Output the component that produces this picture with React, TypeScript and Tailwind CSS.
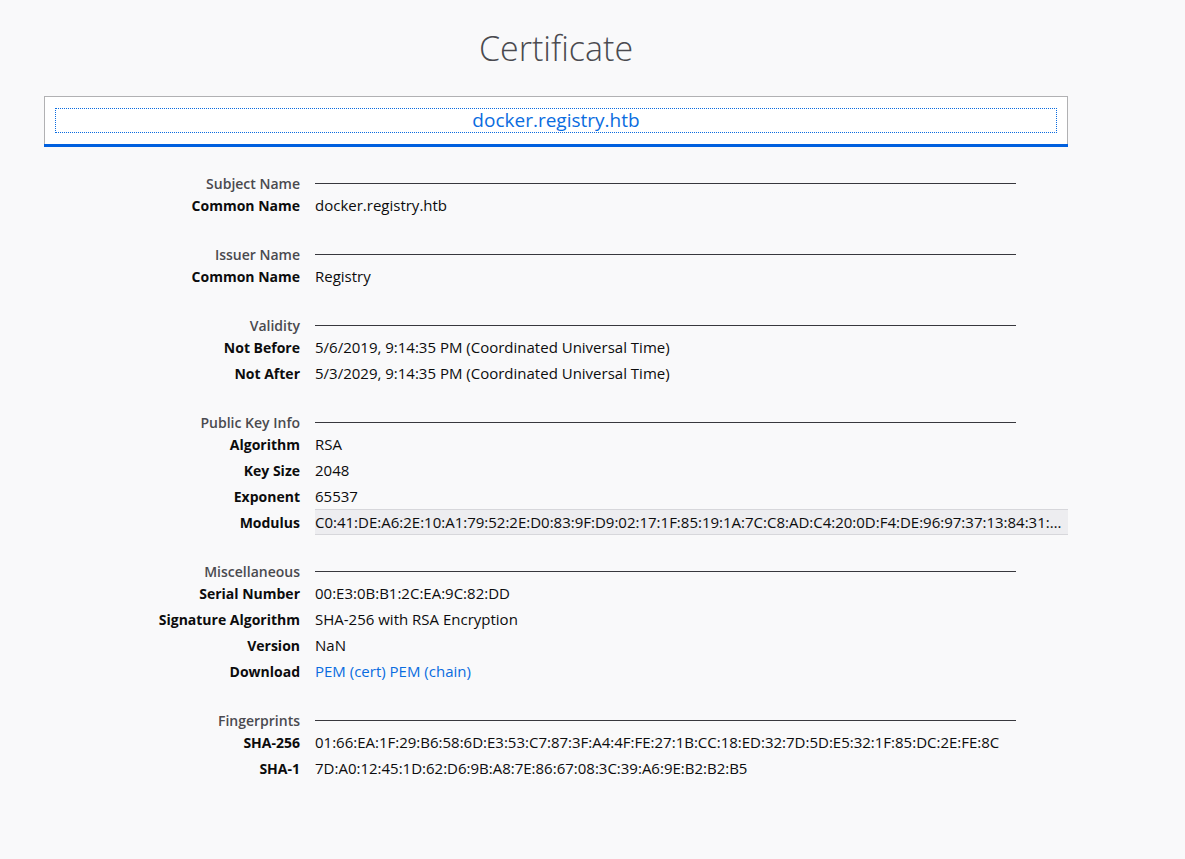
import React from "react";

type Row = { label: string; value: React.ReactNode; box?: boolean };
type Section = { title: string; rows: Row[] };

const sections: Section[] = [
  { title: "Subject Name", rows: [{ label: "Common Name", value: "docker.registry.htb" }] },
  { title: "Issuer Name", rows: [{ label: "Common Name", value: "Registry" }] },
  {
    title: "Validity",
    rows: [
      { label: "Not Before", value: "5/6/2019, 9:14:35 PM (Coordinated Universal Time)" },
      { label: "Not After", value: "5/3/2029, 9:14:35 PM (Coordinated Universal Time)" },
    ],
  },
  {
    title: "Public Key Info",
    rows: [
      { label: "Algorithm", value: "RSA" },
      { label: "Key Size", value: "2048" },
      { label: "Exponent", value: "65537" },
      {
        label: "Modulus",
        box: true,
        value: "C0:41:DE:A6:2E:10:A1:79:52:2E:D0:83:9F:D9:02:17:1F:85:19:1A:7C:C8:AD:C4:20:0D:F4:DE:96:97:37:13:84:31:…",
      },
    ],
  },
  {
    title: "Miscellaneous",
    rows: [
      { label: "Serial Number", value: "00:E3:0B:B1:2C:EA:9C:82:DD" },
      { label: "Signature Algorithm", value: "SHA-256 with RSA Encryption" },
      { label: "Version", value: "NaN" },
      {
        label: "Download",
        value: (
          <span className="text-[#0a6ce0]">
            <span>PEM (cert)</span> <span>PEM (chain)</span>
          </span>
        ),
      },
    ],
  },
  {
    title: "Fingerprints",
    rows: [
      {
        label: "SHA-256",
        value: "01:66:EA:1F:29:B6:58:6D:E3:53:C7:87:3F:A4:4F:FE:27:1B:CC:18:ED:32:7D:5D:E5:32:1F:85:DC:2E:FE:8C",
      },
      { label: "SHA-1", value: "7D:A0:12:45:1D:62:D6:9B:A8:7E:86:67:08:3C:39:A6:9E:B2:B2:B5" },
    ],
  },
];

const CertSection = ({ section }: { section: Section }) => (
  <div className="mt-[27px]">
    <div className="flex items-center h-[18px]">
      <div className="w-[271px] text-right font-semibold text-[14px] text-[#4a4a4f] pr-[15px] shrink-0">
        {section.title}
      </div>
      <div className="w-[701px] h-px bg-[#38383d]" />
    </div>
    {section.rows.map((row) => (
      <div key={row.label} className="flex items-center h-[26px]">
        <div className="w-[271px] text-right font-bold text-[14px] text-[#0c0c0d] pr-[15px] shrink-0">
          {row.label}
        </div>
        {row.box ? (
          <div className="w-[753px] h-[26px] flex items-center bg-[#ededf0] border-y border-[#d7d7db] whitespace-nowrap">
            {row.value}
          </div>
        ) : (
          <div className="whitespace-nowrap">{row.value}</div>
        )}
      </div>
    ))}
  </div>
);

export default function App() {
  return (
    <div
      className="min-h-[859px] bg-[#f9f9fa] text-[#0c0c0d] text-[15px]"
      style={{ fontFamily: '"Open Sans", "Noto Sans", sans-serif' }}
    >
      <h1 className="ml-[44px] w-[1024px] pt-[24px] h-[96px] text-center text-[34px] font-light text-[#4a4a4f] leading-[48px]">
        Certificate
      </h1>
      <div className="ml-[44px] w-[1024px] h-[51px] bg-white border border-b-0 border-[#b1b1b3] flex flex-col">
        <div className="flex-1 flex items-center px-[10px]">
          <div className="w-full h-[25px] border border-dotted border-[#0a6ce0] flex items-center justify-center text-[19px] text-[#0a6ce0]">
            docker.registry.htb
          </div>
        </div>
        <div className="h-[3px] bg-[#0060df] -mx-px" />
      </div>
      <div className="ml-[44px]">
        {sections.map((s) => (
          <CertSection key={s.title} section={s} />
        ))}
      </div>
    </div>
  );
}
